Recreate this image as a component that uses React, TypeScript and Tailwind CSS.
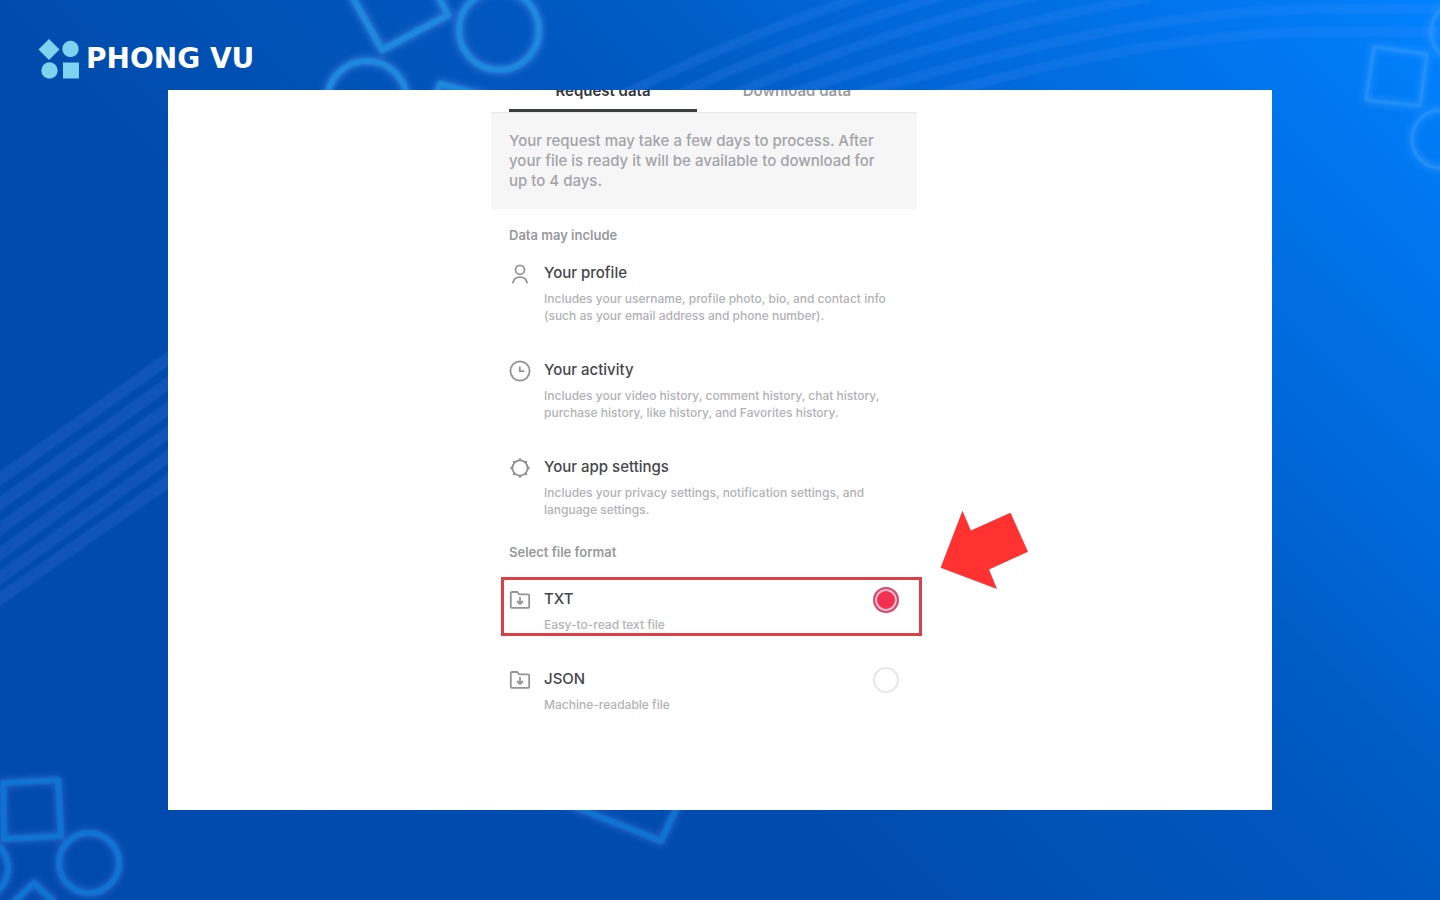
import { useState } from "react";
import type { ReactNode } from "react";

const ITEMS = [
  {
    title: "Your profile",
    text: "Includes your username, profile photo, bio, and contact info (such as your email address and phone number).",
    icon: <ProfileIcon />,
  },
  {
    title: "Your activity",
    text: "Includes your video history, comment history, chat history, purchase history, like history, and Favorites history.",
    icon: <ClockIcon />,
  },
  {
    title: "Your app settings",
    text: "Includes your privacy settings, notification settings, and language settings.",
    icon: <GearIcon />,
  },
];

const TABS = [
  { value: "request", label: "Request data" },
  { value: "download", label: "Download data" },
];

const FORMATS = [
  { value: "txt", title: "TXT", text: "Easy-to-read text file" },
  { value: "json", title: "JSON", text: "Machine-readable file" },
];

function Icon({ children }: { children: ReactNode }) {
  return (
    <svg
      viewBox="0 0 22 22"
      className="w-[22px] h-[22px] mt-0.5 shrink-0 text-[#929397]"
      fill="none"
      stroke="currentColor"
      strokeWidth="1.8"
      aria-hidden="true"
    >
      {children}
    </svg>
  );
}

function ProfileIcon() {
  return (
    <Icon>
      <circle cx="11" cy="6.8" r="4.5" />
      <path d="M3.8 20.4c.6-3.9 3.400-6.200 7.200-6.200s6.600 2.300 7.200 6.200" />
    </Icon>
  );
}

function ClockIcon() {
  return (
    <Icon>
      <circle cx="11" cy="11" r="9.600" />
      <path d="M10.800 6.400v4.700h4.400" />
    </Icon>
  );
}

function GearIcon() {
  return (
    <Icon>
      <circle cx="11" cy="11" r="7.600" />
      <g fill="currentColor" stroke="none">
        <path d="M11 .8l2.200 2.600H8.800zM11 21.200l2.200-2.600H8.800zM.8 11l2.600-2.200v4.400zM21.200 11l-2.600-2.200v4.400z" />
        <path d="M3.800 3.800l3.400.3-3.100 3.100zM18.200 3.800l-3.400.3 3.100 3.100zM3.800 18.200l3.400-.3-3.100-3.100zM18.200 18.200l-3.400-.3 3.100-3.100z" />
      </g>
    </Icon>
  );
}

function FolderIcon() {
  return (
    <Icon>
      <path d="M1.800 17.800V4a1 1 0 0 1 1-1h5.400l2 2.400h9a1 1 0 0 1 1 1v11.400a1 1 0 0 1-1 1H2.800a1 1 0 0 1-1-1z" />
      <path d="M11 8v6.600M8 12l3 3 3-3" />
    </Icon>
  );
}

function Logo() {
  return (
    <a href="#" className="flex items-center gap-1.5">
      <svg viewBox="0 0 42 40" className="w-[42px] h-10" fill="#7dd3f0" aria-hidden="true">
        <path d="M11 0l10.500 10.500L11 21 .5 10.500z" />
        <circle cx="32.500" cy="10" r="8.200" />
        <circle cx="11.500" cy="31.500" r="8.200" />
        <path d="M25 23.500h16V39.500H25z" />
      </svg>
      <span className="font-['DejaVu_Sans',sans-serif] font-bold text-[28px] leading-8 text-white">PHONG VU</span>
    </a>
  );
}

function Backdrop() {
  return (
    <svg
      viewBox="0 0 1440 900"
      preserveAspectRatio="xMidYMid slice"
      className="absolute inset-0 w-full h-full"
      fill="none"
      aria-hidden="true"
    >
      <defs>
        <filter id="soft" x="-20%" y="-20%" width="140%" height="140%">
          <feGaussianBlur stdDeviation="1.300" />
        </filter>
        <filter id="glow" x="-20%" y="-20%" width="140%" height="140%">
          <feGaussianBlur stdDeviation="3" />
        </filter>
        <g id="shapes">
          <path d="M352-4l30 54 66-35-10-19" />
          <circle cx="499" cy="30" r="40" />
          <circle cx="367" cy="101" r="40" />
          <path d="M436 98l4-14 50 13" />
        </g>
        <g id="shapes-low">
          <path d="M3 783l55-3 3 56-57 3z" />
          <circle cx="89" cy="863" r="30" />
          <circle cx="-22" cy="868" r="30" />
          <path d="M12 904l22-21 22 21" />
          <path d="M560 801l101 40 18-38" />
        </g>
        <g id="shapes-right">
          <path d="M1374 47l53 7-7 52-54-6z" />
          <circle cx="1441" cy="139" r="29" />
          <circle cx="1461" cy="32" r="30" />
        </g>
      </defs>

      {/* light trails */}
      <g stroke="#4a7de8" strokeOpacity="0.2" strokeWidth="12" filter="url(#soft)">
        <path d="M-10 486L180 350" />
        <path d="M-10 511L180 375" />
        <path d="M-10 536L180 400" />
        <path d="M-10 561L180 424" />
        <path d="M-10 585L180 448" />
        <path d="M-10 606L180 473" />
      </g>
      <g stroke="#3f8cf5" strokeOpacity="0.2" strokeWidth="10" filter="url(#soft)">
        <path d="M620 96Q740 36 870-6" />
        <path d="M675 96Q800 36 950-6" />
        <path d="M730 96Q880 30 1050-8" />
        <path d="M785 96Q960 32 1150-3" />
        <path d="M845 98Q1130 10 1320 9T1450 9" />
        <path d="M925 98Q1150 33 1320 32T1450 33" />
      </g>

      <g strokeLinejoin="round">
        <use href="#shapes" stroke="#5a8cf0" strokeOpacity="0.5" strokeWidth="10" filter="url(#glow)" />
        <use href="#shapes" stroke="#1a8ade" strokeWidth="6" filter="url(#soft)" />
        <use href="#shapes-low" stroke="#4a6fe0" strokeOpacity="0.5" strokeWidth="9" filter="url(#glow)" />
        <use href="#shapes-low" stroke="#1174d2" strokeWidth="6" filter="url(#soft)" />
        <use href="#shapes-right" stroke="#3f9dff" strokeOpacity="0.4" strokeWidth="8" filter="url(#glow)" />
        <use href="#shapes-right" stroke="#3a9dfa" strokeOpacity="0.7" strokeWidth="2" filter="url(#soft)" />
      </g>
    </svg>
  );
}

function Arrow() {
  return (
    <svg viewBox="0 0 88 80" className="absolute left-full -top-[70px] ml-[21px] w-[88px] h-20" fill="#ff3131" aria-hidden="true">
      <path d="M22.500.7L30.800 20.400 70.500 2.700 88 41.700 49 59.500 57 79 .6 57.700z" />
    </svg>
  );
}

export default function App() {
  const [tab, setTab] = useState("request");
  const [format, setFormat] = useState("txt");

  return (
    <div className="relative min-h-screen flex flex-col overflow-hidden font-['Inter',sans-serif] bg-[linear-gradient(45deg,#004aad_0%,#004cae_38%,#0053b8_51%,#0058c1_62%,#0060cc_69%,#0066d6_74%,#0073ea_87%,#0082ff_100%)]">
      <Backdrop />

      <header className="relative h-[90px] pt-7 px-[38px] flex items-center">
        <Logo />
      </header>

      <main className="relative flex-1 mx-6 lg:mx-[168px] mb-[90px] pr-8 pb-12 bg-white flex justify-center">
        <div className="w-[426px]">
          {/* the tab row is scrolled halfway out of view */}
          <div className="h-[23px] overflow-hidden flex items-end gap-1.5 px-[18px] border-b border-[#e6e6e7]">
            {TABS.map(({ value, label }) => (
              <button
                key={value}
                onClick={() => setTab(value)}
                className={`w-[188px] h-[46px] pt-1.5 shrink-0 text-[15px] leading-5 font-semibold border-b-3 ${
                  tab === value ? "border-[#3c3d42] text-[#35363b]" : "border-transparent text-[#9b9ca0]"
                }`}
              >
                {label}
              </button>
            ))}
          </div>

          <p className="pl-[18px] pr-8 py-[18px] bg-[#f6f6f6] text-[15px] leading-5 font-medium text-[#a3a4a7]">
            Your request may take a few days to process. After your file is ready it will be available to download for up to 4
            days.
          </p>

          <h2 className="mt-4 px-[18px] text-[13px] leading-5 font-semibold text-[#98999c]">Data may include</h2>
          <ul className="mt-4 px-[18px] flex flex-col gap-[34px]">
            {ITEMS.map(({ title, text, icon }) => (
              <li key={title} className="flex gap-[13px]">
                {icon}
                <div>
                  <h3 className="text-[15px] leading-6 font-medium text-[#45464b]">{title}</h3>
                  <p className="mt-[5px] text-[12px] leading-[17px] font-medium text-[#b1b2b4]">{text}</p>
                </div>
              </li>
            ))}
          </ul>

          <h2 className="mt-6 px-[18px] text-[13px] leading-5 font-semibold text-[#98999c]">Select file format</h2>
          <div className="mt-[15px] ml-2.5 -mr-[5px] flex flex-col gap-[21px]">
            {FORMATS.map(({ value, title, text }) => (
              <label
                key={value}
                className={`relative flex gap-[13px] pt-[7px] pl-[5px] pr-5 border-3 ${
                  format === value ? "border-[#dc4045]" : "border-transparent"
                }`}
              >
                <FolderIcon />
                <span className="flex-1">
                  <span className="block text-[15px] leading-6 font-medium text-[#45464b]">{title}</span>
                  <span className="block mt-[5px] text-[12px] leading-[17px] font-medium text-[#b1b2b4]">{text}</span>
                </span>
                <input
                  type="radio"
                  name="format"
                  value={value}
                  checked={format === value}
                  onChange={() => setFormat(value)}
                  className="appearance-none w-[26px] h-[26px] rounded-full border-2 border-[#e6e6e8] checked:border-[#cf4d73] checked:bg-[#f52f51] checked:shadow-[inset_0_0_0_2px_#ffc3cf]"
                />
                {format === value && <Arrow />}
              </label>
            ))}
          </div>
        </div>
      </main>
    </div>
  );
}
